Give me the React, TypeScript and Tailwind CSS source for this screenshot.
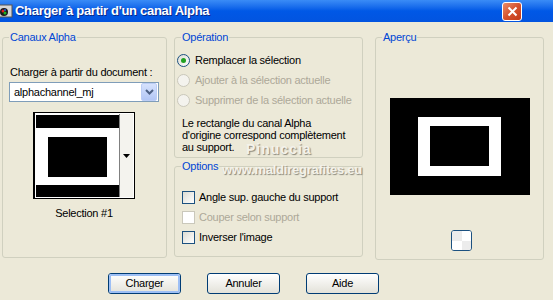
import type { ReactNode } from "react";

const font = { fontFamily: '"Liberation Sans", Arial, sans-serif', letterSpacing: "-0.25px" };

function Group({ title, className, children }: { title: string; className: string; children: ReactNode }) {
  return (
    <fieldset className={`border border-[#d0d0bf] rounded-[3px] ${className}`}>
      <legend className="ml-[6px] px-[1px] text-[11px] leading-[13px] text-[#0046d5]">{title}</legend>
      {children}
    </fieldset>
  );
}

function Radio({ label, checked, disabled }: { label: string; checked?: boolean; disabled?: boolean }) {
  return (
    <div className="flex items-center h-[20px] pl-[2px]">
      <span
        className={`flex items-center justify-center w-[13px] h-[13px] rounded-full border ${
          disabled ? "border-[#cac8bb] bg-[#f4f3ee]" : "border-[#1c5180] bg-gradient-to-br from-[#dcdcd4] to-white"
        }`}
      >
        {checked && <span className="w-[5px] h-[5px] rounded-full bg-[#21a121]" />}
      </span>
      <span className={`ml-[5px] text-[11px] ${disabled ? "text-[#aca899]" : "text-black"}`}>{label}</span>
    </div>
  );
}

function Check({ label, disabled }: { label: string; disabled?: boolean }) {
  return (
    <div className="flex items-center h-[20px] pl-[7px]">
      <span
        className={`w-[13px] h-[13px] border ${
          disabled ? "border-[#cac8bb] bg-white" : "border-[#1c5180] bg-gradient-to-br from-[#dcdcd4] to-white"
        }`}
      />
      <span className={`ml-[4px] text-[11px] ${disabled ? "text-[#aca899]" : "text-black"}`}>{label}</span>
    </div>
  );
}

function XpButton({ label, isDefault }: { label: string; isDefault?: boolean }) {
  return (
    <button
      type="button"
      className="w-[73px] h-[21px] rounded-[3px] border border-[#003c74] bg-gradient-to-b from-white to-[#e3e2d9] p-0"
    >
      <span
        className={`flex items-center justify-center w-full h-full rounded-[2px] text-[11px] text-black ${
          isDefault ? "border-2 border-[#9dbff5]" : ""
        }`}
      >
        {label}
      </span>
    </button>
  );
}

export default function App() {
  return (
    <div className="w-[553px] h-[300px] bg-[#ece9d8] overflow-hidden relative" style={font}>
      {/* title bar */}
      <div className="h-[22px] flex items-center bg-gradient-to-b from-[#3a8cf6] via-[#0058e6] to-[#0254e0]">
        <svg width="14" height="14" viewBox="0 0 14 14" className="ml-[-1px]">
          <rect x="0" y="1" width="13" height="12" fill="#d6d6d6" stroke="#555" />
          <circle cx="5" cy="8" r="4" fill="#1a1a1a" />
          <circle cx="4" cy="7" r="1.5" fill="#e02020" />
          <circle cx="6" cy="9" r="1.5" fill="#20b020" />
          <circle cx="6" cy="6" r="1" fill="#2060e0" />
        </svg>
        <span
          className="ml-[2px] text-[13px] font-bold text-white tracking-[-0.3px]"
          style={{ textShadow: "1px 1px 0 #0a2a8a" }}
        >
          Charger à partir d'un canal Alpha
        </span>
        <div className="ml-auto mr-[31px] w-[20px] h-[19px] rounded-[3px] border border-white bg-gradient-to-br from-[#e88c6a] via-[#d5522d] to-[#c33a18] flex items-center justify-center">
          <svg width="11" height="11" viewBox="0 0 11 11">
            <path d="M1.5 1.5 L9.5 9.5 M9.5 1.5 L1.5 9.5" stroke="white" strokeWidth="2" />
          </svg>
        </div>
      </div>

      {/* body */}
      <div className="flex items-start pt-[9px] pl-[2px]">
        <Group title="Canaux Alpha" className="w-[165px] h-[227px]">
          <div className="ml-[7px] mt-[22px] text-[11px] leading-[13px] text-black">Charger à partir du document :</div>
          <div className="ml-[6px] mt-[3px] w-[150px] h-[20px] border border-[#7f9db9] bg-white flex items-center">
            <span className="ml-[4px] text-[11px] text-black">alphachannel_mj</span>
            <span className="ml-auto mr-[1px] w-[16px] h-[18px] rounded-[2px] border border-[#bccdf5] bg-gradient-to-b from-[#d6e2fd] to-[#b2c6f5] flex items-center justify-center">
              <svg width="9" height="6" viewBox="0 0 9 6">
                <path d="M1 1 L4.5 4.5 L8 1" stroke="#4d6185" strokeWidth="2" fill="none" />
              </svg>
            </span>
          </div>
          <div className="ml-[30px] mt-[10px] w-[102px] h-[87px] flex border-l-2 border-t border-b border-r border-black bg-white">
            <div className="w-[84px] pt-[2px] pl-[1px] flex flex-col">
              <div className="h-[13px] bg-black" />
              <div className="h-[9px]" />
              <div className="ml-[12px] w-[59px] h-[40px] bg-black" />
              <div className="h-[8px]" />
              <div className="h-[12px] bg-black" />
            </div>
            <div className="flex-1 my-[1px] mr-[1px] border-l border-[#808080] bg-[#f4f3ee] flex items-center justify-center">
              <svg width="7" height="4" viewBox="0 0 7 4">
                <path d="M0 0 L7 0 L3.5 4 Z" fill="black" />
              </svg>
            </div>
          </div>
          <div className="ml-[30px] w-[102px] mt-[8px] text-center text-[11px] leading-[13px] text-black">Selection #1</div>
        </Group>

        <div className="ml-[7px] w-[189px] flex flex-col gap-[2px]">
          <Group title="Opération" className="h-[127px]">
            <div className="mt-[6px]">
              <Radio label="Remplacer la sélection" checked />
              <Radio label="Ajouter à la sélection actuelle" disabled />
              <Radio label="Supprimer de la sélection actuelle" disabled />
            </div>
            <p className="ml-[7px] mt-[7px] text-[11px] leading-[12px] text-black">
              Le rectangle du canal Alpha
              <br />
              d'origine correspond complètement
              <br />
              au support.
            </p>
          </Group>
          <Group title="Options" className="h-[97px]">
            <div className="mt-[14px]">
              <Check label="Angle sup. gauche du support" />
              <Check label="Couper selon support" disabled />
              <Check label="Inverser l'image" />
            </div>
          </Group>
        </div>

        <Group title="Aperçu" className="ml-[12px] w-[169px] h-[229px]">
          <div className="mx-auto mt-[54px] w-[140px] h-[97px] bg-black flex items-center justify-center">
            <div className="bg-white px-[12px] pt-[9px] pb-[10px]">
              <div className="w-[59px] h-[40px] bg-black" />
            </div>
          </div>
          <div className="ml-[75px] mt-[35px] w-[21px] h-[21px] rounded-[3px] border border-[#1c5180] bg-[#f6f6f4] grid grid-cols-2 overflow-hidden">
            <div className="bg-[#ececec]" />
            <div className="bg-white" />
            <div className="bg-white" />
            <div className="bg-[#ececec]" />
          </div>
        </Group>
      </div>

      {/* buttons */}
      <div className="flex gap-[26px] pl-[108px] mt-[13px]">
        <XpButton label="Charger" isDefault />
        <XpButton label="Annuler" />
        <XpButton label="Aide" />
      </div>

      {/* watermark */}
      <div
        className="absolute left-[246px] top-[139px] text-[14px] font-bold tracking-[1px] text-[#f4f2ea] pointer-events-none"
        style={{ textShadow: "1px 1px 1px #8a887c" }}
      >
        Pinuccia
      </div>
      <div
        className="absolute left-[222px] top-[160px] text-[13px] font-bold text-[#f4f2ea] pointer-events-none"
        style={{ textShadow: "1px 1px 1px #8a887c" }}
      >
        www.maldiregrafites.eu
      </div>
    </div>
  );
}
